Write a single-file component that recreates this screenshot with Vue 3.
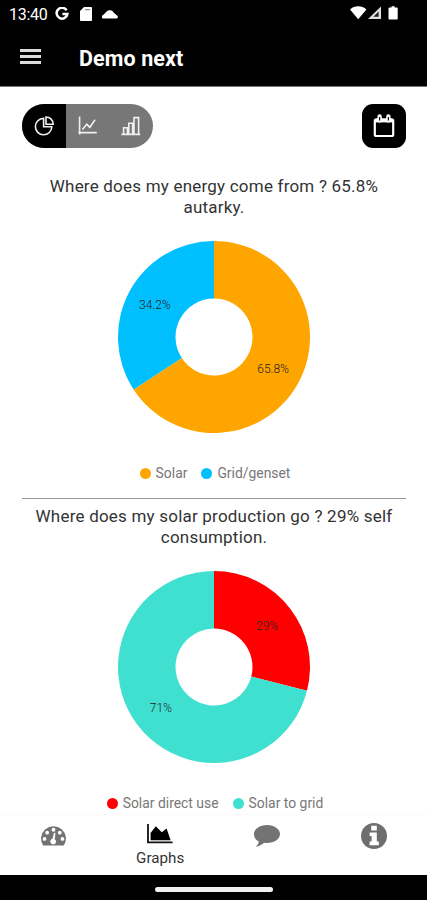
<template>
  <div class="screen">
    <header class="top">
      <div class="status-bar">
        <span class="clock">13:40</span>
        <svg class="google" viewBox="0 0 14 14">
          <path d="M11.6 3.3A5.4 5.4 0 1 0 12.4 7H7.4" />
        </svg>
        <svg class="sd-card" viewBox="0 0 12 14">
          <path d="M4 0h7a1 1 0 0 1 1 1v12a1 1 0 0 1-1 1H1a1 1 0 0 1-1-1V4z" fill="#fff" />
          <path d="M5 2.6h5" stroke="#888" stroke-width="1.2" />
        </svg>
        <svg class="cloud" viewBox="0 0 16 10">
          <path d="M1.4 9.4A1.6 1.6 0 0 1 1 6.200L4.600 2.400a4.600 4.600 0 0 1 7.200 1.400l3.200 2.600a1.600 1.600 0 0 1-.4 3z" fill="#fff" />
        </svg>
        <svg class="signals" viewBox="0 0 50 16">
          <path d="M0 4.4a12 12 0 0 1 16.4 0L8.2 14.2z" fill="#fff" />
          <path d="M31 1.4V14H18z" fill="#e0e0e0" />
          <path d="M28.6 6.6v5.200h-5.200z" fill="#222" />
          <path d="M41.500 1.200h3.200v1.200h2a1 1 0 0 1 1 1v10.200a1 1 0 0 1-1 1h-7.200a1 1 0 0 1-1-1V3.400a1 1 0 0 1 1-1h2z" fill="#fff" />
        </svg>
      </div>
      <div class="app-bar">
        <div class="menu"><i></i><i></i><i></i></div>
        <h1>Demo next</h1>
      </div>
    </header>

    <main>
      <div class="toolbar">
        <div class="segments">
          <button class="active">
            <svg viewBox="0 0 22 22">
              <path d="M10.600 3.400A8.200 8.200 0 1 0 18.800 11.800H10.600z" />
              <path d="M13 2v7.200h7.200A7.200 7.200 0 0 0 13 2z" />
            </svg>
          </button>
          <button>
            <svg viewBox="0 0 22 22">
              <path d="M2.6 1.6v18M1.4 17.6h18.4M5.4 14.4l4.400-5.200 3 3.200 5.200-7.600" />
            </svg>
          </button>
          <button>
            <svg viewBox="0 0 22 22">
              <path d="M1.4 19.4h18.8M3.6 19.4v-6.600h3.800v6.600M8.800 19.400V8.200h3.800v11.200M14 19.400V2.600h4.600v16.800" />
            </svg>
          </button>
        </div>
        <button class="calendar">
          <svg viewBox="0 0 24 24">
            <rect x="2.8" y="5.4" width="18.4" height="16.6" rx="1.6" />
            <path d="M2.8 6.8h18.4" stroke-width="3.2" />
            <path d="M7.6 2.4v4M16.4 2.4v4" stroke-width="4.4" stroke-linecap="round" />
            <path d="M7.6 3v3.4M16.4 3v3.4" stroke="#000" stroke-width="1.1" />
          </svg>
        </button>
      </div>

      <section v-for="chart in charts" :key="chart.title">
        <h2>{{ chart.title }}</h2>
        <svg class="donut" viewBox="-96 -96 192 192">
          <path v-for="s in chart.slices" :key="s.name" :d="s.path" :fill="s.color" />
          <text v-for="s in chart.slices" :key="s.label" :x="s.x" :y="s.y + 4">{{ s.label }}</text>
        </svg>
        <div class="legend">
          <span v-for="s in chart.slices" :key="s.name">
            <i :style="{ background: s.color }"></i>{{ s.name }}
          </span>
        </div>
      </section>
    </main>

    <nav>
      <a>
        <svg class="gauge" viewBox="0 0 28 22">
          <path d="M3.200 21.500A13 13 0 1 1 24.800 21.500z" fill="#737373" />
          <g fill="#fff">
            <circle cx="14" cy="5" r="2" />
            <circle cx="7.4" cy="8" r="2" />
            <circle cx="20.6" cy="8" r="2" />
            <circle cx="4.6" cy="14.6" r="2" />
            <circle cx="23.4" cy="14.6" r="2" />
            <path d="M14.5 8.2l1.6.4-.8 6.200a3 3 0 1 1-2.300-.4z" />
          </g>
        </svg>
      </a>
      <a class="current">
        <svg class="area" viewBox="0 0 26 20">
          <path d="M1 0v18.400h24.600" fill="none" stroke="#111" stroke-width="1.8" />
          <path d="M3.600 16.200V9l5.200-6.800 6 6 4.800-3.600 4 11.600z" fill="#000" />
        </svg>
        <span>Graphs</span>
      </a>
      <a>
        <svg class="bubble" viewBox="0 0 26 22">
          <path d="M13 0c7.200 0 13 4 13 9s-5.800 9-13 9c-1 0-2-.1-3-.2C7.800 19.800 5 21.400 1.900 21.700c1.400-1.300 2.600-2.700 2.900-5.100C1.800 15 0 12.200 0 9 0 4 5.800 0 13 0z" fill="#737373" />
        </svg>
      </a>
      <a>
        <svg class="info" viewBox="0 0 26 26">
          <circle cx="13" cy="13" r="13" fill="#6e6e6e" />
          <path d="M10.200 2.800h5.600v4.700h-5.600zM8.600 9.400h7.200v9.200h2v3.600H8.600v-3.600h2v-5.500h-2z" fill="#fff" />
        </svg>
      </a>
    </nav>
    <footer><div class="home-handle"></div></footer>
  </div>
</template>

<script setup>
const OUTER = 96
const INNER = 38.5

function point(radius, share) {
  const angle = share * 2 * Math.PI
  return [radius * Math.sin(angle), -radius * Math.cos(angle)]
}

function toSlices(items) {
  let start = 0
  return items.map((item) => {
    const share = item.value / 100
    const end = start + share
    const large = share > 0.5 ? 1 : 0
    const [x, y] = point((OUTER + INNER) / 2, start + share / 2)
    const path = [
      `M${point(OUTER, start)}`,
      `A${OUTER},${OUTER} 0 ${large} 1 ${point(OUTER, end)}`,
      `L${point(INNER, end)}`,
      `A${INNER},${INNER} 0 ${large} 0 ${point(INNER, start)}Z`,
    ].join(' ')
    start = end
    return { ...item, path, x, y, label: `${item.value}%` }
  })
}

const charts = [
  {
    title: 'Where does my energy come from ? 65.8% autarky.',
    slices: toSlices([
      { name: 'Solar', value: 65.8, color: '#ffa500' },
      { name: 'Grid/genset', value: 34.2, color: '#00bfff' },
    ]),
  },
  {
    title: 'Where does my solar production go ? 29% self consumption.',
    slices: toSlices([
      { name: 'Solar direct use', value: 29, color: '#ff0000' },
      { name: 'Solar to grid', value: 71, color: '#40e0d0' },
    ]),
  },
]
</script>

<style>
body {
  background: #fff;
}
</style>

<style scoped>
.screen {
  display: flex;
  flex-direction: column;
  height: 900px;
  overflow: hidden;
  background: #fff;
  font-family: Roboto, "Liberation Sans", sans-serif;
}

.top {
  height: 86px;
  flex: none;
  background: #000;
  color: #fff;
  border-bottom: 1px solid #777;
}

.status-bar {
  display: flex;
  align-items: center;
  height: 28px;
  padding: 0 27px 0 9px;
}

.clock {
  width: 46px;
  font-size: 16px;
  letter-spacing: -0.3px;
}

.google {
  width: 14px;
  height: 14px;
  fill: none;
  stroke: #fff;
  stroke-width: 2.5;
}

.sd-card {
  width: 12px;
  height: 14px;
  margin-left: 11px;
}

.cloud {
  width: 16px;
  height: 10px;
  margin-left: 10px;
}

.signals {
  width: 50px;
  height: 16px;
  margin: 0 0 2px auto;
}

.app-bar {
  display: flex;
  align-items: center;
  height: 58px;
  padding-left: 20px;
}

.menu {
  display: flex;
  flex-direction: column;
  gap: 3px;
  width: 21px;
  margin: 0 38px 2px 0;
}

.menu i {
  height: 3px;
  background: #dcdcdc;
}

h1 {
  margin: 2px 0 0;
  font-size: 21.5px;
  font-weight: 700;
  letter-spacing: 0.1px;
}

main {
  flex: none;
  height: 727px;
  padding: 17px 21px 0 22px;
  box-sizing: border-box;
}

.toolbar {
  display: flex;
  justify-content: space-between;
  height: 44px;
}

button {
  display: flex;
  align-items: center;
  justify-content: center;
  padding: 0;
  border: 0;
  background: none;
}

.segments {
  display: flex;
  width: 131px;
  overflow: hidden;
  border-radius: 22px;
  background: #777;
}

.segments button {
  flex: 1;
}

.segments .active {
  background: #000;
}

.segments svg {
  width: 22px;
  height: 22px;
  fill: none;
  stroke: #f0f0f0;
  stroke-width: 1.6;
}

.calendar {
  width: 44px;
  border-radius: 11px;
  background: #000;
}

.calendar svg {
  width: 24px;
  height: 24px;
  fill: none;
  stroke: #fff;
  stroke-width: 2.2;
}

section {
  display: flex;
  flex-direction: column;
  align-items: center;
  padding-top: 28px;
}

section + section {
  margin-top: 17px;
  padding-top: 7px;
  border-top: 1px solid #999;
}

h2 {
  width: 372px;
  margin: 0;
  font-size: 17px;
  font-weight: 400;
  line-height: 21px;
  letter-spacing: 0.21px;
  text-align: center;
  color: #333;
}

.donut {
  flex: none;
  width: 192px;
  height: 192px;
  margin-top: 23px;
}

.donut text {
  font-size: 12px;
  font-weight: 300;
  text-anchor: middle;
  fill: #222;
}

.legend {
  display: flex;
  gap: 14px;
  margin: 32px 0 0 2px;
  font-size: 13.9px;
  line-height: 16px;
  color: #777;
}

.legend span {
  display: flex;
  align-items: center;
}

.legend i {
  width: 11px;
  height: 11px;
  margin-right: 5px;
  border-radius: 50%;
}

nav {
  display: grid;
  grid-template-columns: repeat(4, 1fr);
  flex: none;
  height: 61px;
  border-top: 1px solid #fafafa;
  box-sizing: border-box;
}

nav a {
  display: flex;
  flex-direction: column;
  align-items: center;
  padding-top: 10px;
}

nav .current {
  padding-top: 9px;
}

nav span {
  margin-top: 5px;
  font-size: 15.2px;
  line-height: 18px;
  color: #333;
}

.gauge {
  width: 27px;
  height: 21px;
}

.area {
  width: 26px;
  height: 20px;
}

.bubble {
  width: 26px;
  height: 22px;
}

.info {
  width: 26px;
  height: 26px;
  margin-top: -2px;
}

footer {
  display: flex;
  align-items: center;
  justify-content: center;
  flex: 1;
  padding-top: 4px;
  background: #000;
}

.home-handle {
  width: 118px;
  height: 5px;
  border-radius: 3px;
  background: #f2f2f2;
}
</style>
